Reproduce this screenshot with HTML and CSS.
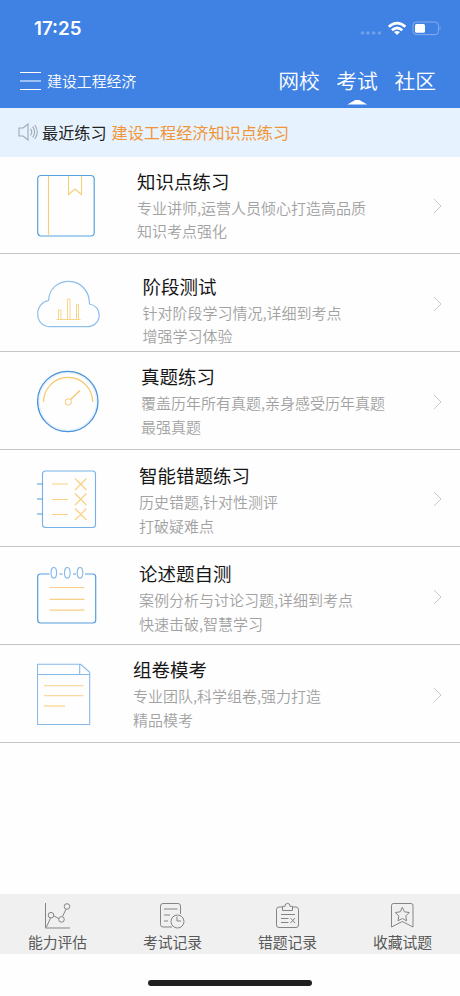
FILE: index.html
```html
<!DOCTYPE html>
<html lang="zh-CN">
<head>
    <meta charset="UTF-8">
    <meta name="viewport" content="width=device-width, initial-scale=1.0">
    <title>考试</title>
    <link rel="stylesheet" href="styles.css">
</head>
<body>
    <header class="header">
        <div class="status">
            <span class="time">17:25</span>
            <svg width="82" height="18" viewBox="0 0 82 18">
                <g fill="#719fe9"><circle cx="2.5" cy="13" r="1.8"/><circle cx="8" cy="13" r="1.8"/><circle cx="13.7" cy="13" r="1.8"/><circle cx="19.5" cy="13" r="1.8"/></g>
                <path d="M28.8 6.8q8.3-7.4 16.600 0M31.900 10.300q5.200-4.600 10.400 0" fill="none" stroke="#fff" stroke-width="2.700"/>
                <path d="M34 12.100q3-2.200 6 0l-3 3z" fill="#fff"/>
                <rect x="53" y="2" width="25.400" height="12.600" rx="3.200" fill="none" stroke="#85adee"/>
                <rect x="55" y="4" width="10" height="8.800" rx="1.500" fill="#fff"/>
                <path d="M79.600 6.500q2 1.800 0 3.800z" fill="#85adee"/>
            </svg>
        </div>
        <div class="nav">
            <svg width="22" height="20" viewBox="0 0 22 20"><path d="M0 1.500h21M0 10h21M0 18.500h21" stroke="#fff" stroke-width="1.100"/></svg>
            <span class="course">建设工程经济</span>
            <nav class="tabs">
                <span>网校</span>
                <span class="active">考试</span>
                <span>社区</span>
            </nav>
        </div>
    </header>

    <div class="notice">
        <svg width="21" height="18" viewBox="0 0 21 18" fill="none" stroke="#a0a9b3" stroke-width="1.1"><path d="M1 5h4l5-4v16l-5-4H1zM12.5 5.8q2.500 3.200 0 6.500M14.600 3.700q4 5.300 0 10.700M16.700 2q5.200 7 0 14"/></svg>
        <span class="label">最近练习</span>
        <span class="recent">建设工程经济知识点练习</span>
    </div>

    <main class="list">
        <section class="row points">
            <svg class="icon" width="66" height="66" viewBox="0 0 66 66" fill="none">
                <rect x=".7" y="2.5" width="56.5" height="60.5" rx="3.5" stroke="#55a1df" stroke-width="1.2"/>
                <path d="M11.5 3v59.5M31.5 3v18.500l6.500-5.500 6.500 5.500V3" stroke="#f8cf78" stroke-width="1.1"/>
            </svg>
            <div class="text"><h2>知识点练习</h2><p>专业讲师,运营人员倾心打造高品质<br>知识考点强化</p></div>
            <svg class="arrow" width="9" height="16" viewBox="0 0 9 16"><path d="M1 1l7 7-7 7"/></svg>
        </section>
        <section class="row stage">
            <svg class="icon" width="66" height="66" viewBox="0 0 66 66" fill="none">
                <path d="M11.6 25.5C12 13.5 21 6.3 32 6.3s20.5 9 20.5 22.7c6 1 9.7 5.7 9.7 11 0 7-5.5 11.7-12 11.7H13C6 51.700.7 46.500.7 39c0-7.500 4.800-12.500 10.900-13.500z" stroke="#8fbfec" stroke-width="1.2"/>
                <path d="M19.5 44.500h24M21.500 44v-9H24v9M30.500 44V24H33v20M39.500 44V29.500h2V44" stroke="#f9d48b"/>
            </svg>
            <div class="text"><h2>阶段测试</h2><p>针对阶段学习情况,详细到考点<br>增强学习体验</p></div>
            <svg class="arrow" width="9" height="16" viewBox="0 0 9 16"><path d="M1 1l7 7-7 7"/></svg>
        </section>
        <section class="row real">
            <svg class="icon" width="66" height="66" viewBox="0 0 66 66" fill="none">
                <circle cx="30.8" cy="32.5" r="29" stroke="#e9f3fd" stroke-width="2"/>
                <circle cx="30.8" cy="32.5" r="30.2" stroke="#4a94da" stroke-width="1.3"/>
                <path d="M6.500 33a24.600 24.600 0 0 1 49.200 0M33.500 30.500l9.500-9" stroke="#f6c76d" stroke-width="1.3"/>
                <circle cx="31.3" cy="33" r="3.2" stroke="#f6cc7c"/>
            </svg>
            <div class="text"><h2>真题练习</h2><p>覆盖历年所有真题,亲身感受历年真题<br>最强真题</p></div>
            <svg class="arrow" width="9" height="16" viewBox="0 0 9 16"><path d="M1 1l7 7-7 7"/></svg>
        </section>
        <section class="row wrong">
            <svg class="icon" width="66" height="66" viewBox="0 0 66 66" fill="none">
                <rect x="5.5" y="5" width="53" height="56.5" rx="3" stroke="#78b1e7" stroke-width="1.1"/>
                <path d="M0 18h5.500M0 33h5.500M0 48h5.500" stroke="#4d9bdd" stroke-width="1.2"/>
                <path d="M15 18h16M15 33.500h16M15 48.500h16M38 12.500l11.500 11.500M49.500 12.500l-11.500 11.500M38 27.500l11.500 11.500M49.500 27.500l-11.500 11.500M38 42.500l11.500 11.500M49.500 42.500l-11.500 11.500" stroke="#f9d084" stroke-width="1.2"/>
            </svg>
            <div class="text"><h2>智能错题练习</h2><p>历史错题,针对性测评<br>打破疑难点</p></div>
            <svg class="arrow" width="9" height="16" viewBox="0 0 9 16"><path d="M1 1l7 7-7 7"/></svg>
        </section>
        <section class="row essay">
            <svg class="icon" width="66" height="66" viewBox="0 0 66 66" fill="none">
                <path d="M12.500 11H3.500Q.7 11 .7 14v43q0 3 3 3h52q3 0 3-3V14q0-3-3-3H48M22.500 11h3M36 11h3" stroke="#559dde" stroke-width="1.2"/>
                <g stroke="#82b7e8" stroke-width="1.1"><ellipse cx="16.8" cy="9.8" rx="2.8" ry="5.3"/><ellipse cx="30.3" cy="9.8" rx="2.8" ry="5.3"/><ellipse cx="43" cy="9.8" rx="2.8" ry="5.3"/></g>
                <path d="M12.500 24.500h35M12.500 36.300h35M12.500 47.200h35" stroke="#f9d084" stroke-width="1.2"/>
            </svg>
            <div class="text"><h2>论述题自测</h2><p>案例分析与讨论习题,详细到考点<br>快速击破,智慧学习</p></div>
            <svg class="arrow" width="9" height="16" viewBox="0 0 9 16"><path d="M1 1l7 7-7 7"/></svg>
        </section>
        <section class="row paper">
            <svg class="icon" width="66" height="66" viewBox="0 0 66 66" fill="none">
                <path d="M.5 3.300h43.200l9 8v52.200H.5zM.5 13.500h42.200V3.300M43 13.500h9.700" stroke="#88b9e9" stroke-width="1.1"/>
                <path d="M7 24.700h39.500M7 34.700h39.500M7 45h21" stroke="#fadb9f" stroke-width="1.3"/>
            </svg>
            <div class="text"><h2>组卷模考</h2><p>专业团队,科学组卷,强力打造<br>精品模考</p></div>
            <svg class="arrow" width="9" height="16" viewBox="0 0 9 16"><path d="M1 1l7 7-7 7"/></svg>
        </section>
    </main>

    <footer class="tabbar">
        <div class="item">
            <svg width="28" height="28" viewBox="0 0 28 28"><path d="M1.500 1v25H26M2.500 25l4-9M9.500 13.700l5.500 3M18.500 14.500l3.500-7.300"/><circle cx="7" cy="13.2" r="2.8"/><circle cx="17.5" cy="17.4" r="2.8"/><circle cx="23" cy="4.5" r="2.8"/></svg>
            <span>能力评估</span>
        </div>
        <div class="item">
            <svg width="28" height="28" viewBox="0 0 28 28"><path d="M13 25H4q-2.500 0-2.500-2.500V4Q1.500 1.500 4 1.500h15q2.500 0 2.500 2.500v8M5 7h13.500M5 13h6M5 19h4M18 14.500V19h4"/><circle cx="18.5" cy="19.5" r="6.5"/></svg>
            <span>考试记录</span>
        </div>
        <div class="item">
            <svg width="28" height="28" viewBox="0 0 28 28"><path d="M8.500 5H5Q2.500 5 2.500 7.500V23Q2.500 25.500 5 25.500h17q2.500 0 2.500-2.500V7.500Q24.500 5 22 5h-3.500M8.500 8.500V4.300H11q0-3 2.500-3t2.500 3h2.500v4.200zM7 12.500h14M7 16.500h7.500M7 20.500h7.500M16.500 16l4.500 5M21 16l-4.500 5"/></svg>
            <span>错题记录</span>
        </div>
        <div class="item">
            <svg width="28" height="28" viewBox="0 0 28 28"><path d="M2.500 25V3.500q0-2 2-2H22q2 0 2 2V25l-10.700-5.500zM13.300 5.300l2.100 4.500 4.900.7-3.500 3.500.8 4.800-4.300-2.300L9 18.800l.8-4.800-3.500-3.500 4.900-.7z"/></svg>
            <span>收藏试题</span>
        </div>
    </footer>
    <div class="home"></div>
</body>
</html>
```
FILE: styles.css
```css
* { box-sizing: border-box; }
body { margin: 0; height: 996px; display: flex; flex-direction: column; overflow: hidden; background: #fefefe; font-family: "Noto Sans CJK SC", sans-serif; }
svg { display: block; flex: none; }
.header { height: 108px; flex: none; background: #3f82e3; color: #fff; }
.status { height: 54px; padding: 20px 18px 0 34px; display: flex; justify-content: space-between; }
.time { font: 600 18.7px/17px Inter, sans-serif; }
.nav { height: 53px; padding: 0 24px 0 20px; display: flex; align-items: center; }
.course { margin-left: 5px; font-size: 14.9px; font-weight: 350; }
.tabs { margin-left: auto; display: flex; gap: 16.5px; font-size: 20.8px; line-height: 53px; font-weight: 350; }
.active { position: relative; }
/* pointer under the current tab */
.active::after { content: ""; position: absolute; left: 11px; bottom: 2.5px; width: 20px; height: 5px; background: #fff; clip-path: polygon(0 100%, 40% 10%, 50% 0, 60% 10%, 100% 100%); }
.notice { height: 48.5px; flex: none; padding-left: 18px; display: flex; align-items: center; background: #e6f2fe; font-size: 16.15px; }
.label { margin-left: 3px; color: #222; }
.recent { margin-left: 5px; color: #f19537; }
.row { height: 97.7px; padding: 0 18px 0 37px; display: flex; align-items: flex-start; border-bottom: 1px solid #c4c4c4; }
.icon { margin-top: 16px; }
.text { flex: 1; white-space: nowrap; }
h2 { margin: 0; font-size: 18.5px; line-height: 32px; font-weight: 400; color: #161616; }
p { margin: -1px 0 0; font-size: 15px; line-height: 23.7px; font-weight: 350; color: #a2a2a2; }
.arrow { align-self: center; margin-top: 3px; fill: none; stroke: #c9c9c9; stroke-width: 1; }
.points .text { padding: 8px 0 0 34px; }
.stage .text { padding: 15.5px 0 0 39.5px; }
.stage .icon { margin-top: 21px; }
.real .text { padding: 8px 0 0 38px; }
.real .icon { margin-top: 17px; }
.wrong .text { padding: 9.5px 0 0 36px; }
.essay .text { padding: 10px 0 0 36px; }
.paper .text { padding: 8px 0 0 30px; }
.tabbar { height: 60px; flex: none; margin-top: auto; display: flex; background: #f0f0f0; }
.item { flex: 1; padding-top: 8px; display: flex; flex-direction: column; align-items: center; font-size: 14.8px; line-height: 24px; color: #595959; }
.item svg { fill: none; stroke: #858585; stroke-width: 1; }
.home { width: 164px; height: 6px; flex: none; margin: 26px auto 10px; border-radius: 3px; background: #202020; }
```
